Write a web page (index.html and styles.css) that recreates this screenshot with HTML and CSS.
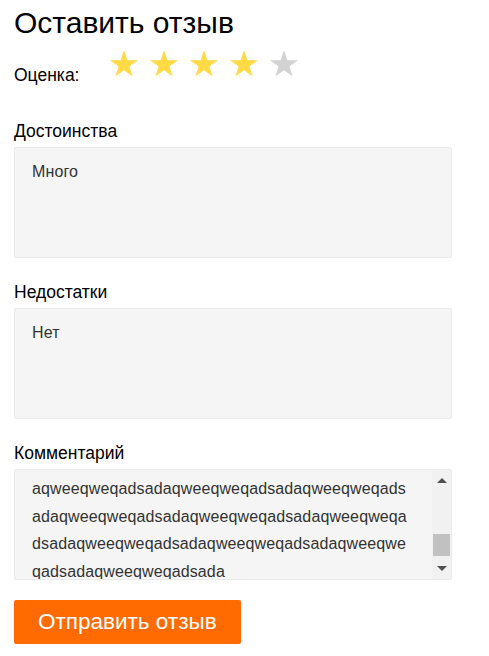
FILE: index.html
```html
<!DOCTYPE html>
<html lang="ru">
<head>
<meta charset="utf-8">
<title>Оставить отзыв</title>
<link rel="stylesheet" href="styles.css">
</head>
<body>
<div class="page">
  <h1 class="title">Оставить отзыв</h1>
  <div class="rating">
    <span class="rating-label">Оценка:</span>
    <div class="stars">
      <svg class="star on" viewBox="0 0 28 27" width="28" height="27"><polygon points="14,0 17.3,10.15 27.98,10.16 19.34,16.44 22.64,26.59 14,20.32 5.36,26.59 8.66,16.44 0.02,10.16 10.7,10.15"/></svg>
      <svg class="star on" viewBox="0 0 28 27" width="28" height="27"><polygon points="14,0 17.3,10.15 27.98,10.16 19.34,16.44 22.64,26.59 14,20.32 5.36,26.59 8.66,16.44 0.02,10.16 10.7,10.15"/></svg>
      <svg class="star on" viewBox="0 0 28 27" width="28" height="27"><polygon points="14,0 17.3,10.15 27.98,10.16 19.34,16.44 22.64,26.59 14,20.32 5.36,26.59 8.66,16.44 0.02,10.16 10.7,10.15"/></svg>
      <svg class="star on" viewBox="0 0 28 27" width="28" height="27"><polygon points="14,0 17.3,10.15 27.98,10.16 19.34,16.44 22.64,26.59 14,20.32 5.36,26.59 8.66,16.44 0.02,10.16 10.7,10.15"/></svg>
      <svg class="star off" viewBox="0 0 28 27" width="28" height="27"><polygon points="14,0 17.3,10.15 27.98,10.16 19.34,16.44 22.64,26.59 14,20.32 5.36,26.59 8.66,16.44 0.02,10.16 10.7,10.15"/></svg>
    </div>
  </div>

  <div class="field">
    <div class="label">Достоинства</div>
    <div class="box"><div class="box-text">Много</div></div>
  </div>

  <div class="field">
    <div class="label">Недостатки</div>
    <div class="box"><div class="box-text">Нет</div></div>
  </div>

  <div class="field">
    <div class="label">Комментарий</div>
    <div class="box box-scroll">
      <div class="box-text scrolled">
        <div class="line">aqweeqweqadsadaqweeqweqadsadaqweeqweqads</div>
        <div class="line">adaqweeqweqadsadaqweeqweqadsadaqweeqweqa</div>
        <div class="line">dsadaqweeqweqadsadaqweeqweqadsadaqweeqwe</div>
        <div class="line">qadsadaqweeqweqadsada</div>
      </div>
      <div class="scrollbar">
        <div class="arrow up"></div>
        <div class="track"><div class="thumb"></div></div>
        <div class="arrow down"></div>
      </div>
    </div>
  </div>

  <button class="submit" type="button">Отправить отзыв</button>
</div>
</body>
</html>
```

FILE: styles.css
```css
html, body {
  margin: 0;
  padding: 0;
  background: #ffffff;
}

body {
  font-family: "Liberation Sans", Arial, sans-serif;
  color: #000000;
}

.page {
  width: 438px;
  padding: 6px 14px 0;
}

.title {
  margin: 0;
  font-size: 30px;
  line-height: 34px;
  font-weight: normal;
  color: #000;
}

.rating {
  display: flex;
  align-items: flex-start;
  margin-top: 10px;
}

.rating-label {
  width: 96px;
  margin-top: 15px;
  font-size: 17.5px;
  line-height: 20px;
}

.stars {
  display: flex;
  gap: 12px;
}

.star {
  display: block;
}

.star.on {
  fill: #ffda44;
}

.star.off {
  fill: #d2d2d2;
}

.field {
  margin-top: 36px;
}

.field + .field {
  margin-top: 24px;
}

.label {
  font-size: 17.5px;
  line-height: 20px;
  margin-bottom: 6px;
  color: #000;
}

.box {
  box-sizing: border-box;
  height: 111px;
  background: #f5f5f5;
  border: 1px solid #ebebeb;
  border-radius: 2px;
  overflow: hidden;
}

.box-text {
  padding: 10px 17px 0;
  font-size: 16px;
  line-height: 27.5px;
  letter-spacing: 0.12px;
  color: #333;
}

.box-scroll {
  display: flex;
}

.box-scroll .box-text {
  flex: 1;
  padding-top: 5px;
}

.scrollbar {
  width: 19px;
  background: #f1f1f1;
  display: flex;
  flex-direction: column;
  align-items: center;
}

.arrow {
  width: 0;
  height: 0;
  border-left: 5px solid transparent;
  border-right: 5px solid transparent;
}

.arrow.up {
  margin-top: 8px;
  border-bottom: 5px solid #505050;
}

.arrow.down {
  margin-bottom: 8px;
  border-top: 5px solid #505050;
}

.track {
  flex: 1;
  width: 100%;
  display: flex;
  flex-direction: column;
  justify-content: flex-end;
  align-items: center;
  padding-bottom: 10px;
}

.thumb {
  width: 17px;
  height: 22px;
  background: #c1c1c1;
}

.submit {
  display: block;
  margin-top: 20px;
  height: 44px;
  padding: 0 24px;
  border: none;
  border-radius: 2px;
  background: #ff6b00;
  color: #fff;
  font-family: "Liberation Sans", Arial, sans-serif;
  font-size: 22.5px;
  line-height: 44px;
}
```
